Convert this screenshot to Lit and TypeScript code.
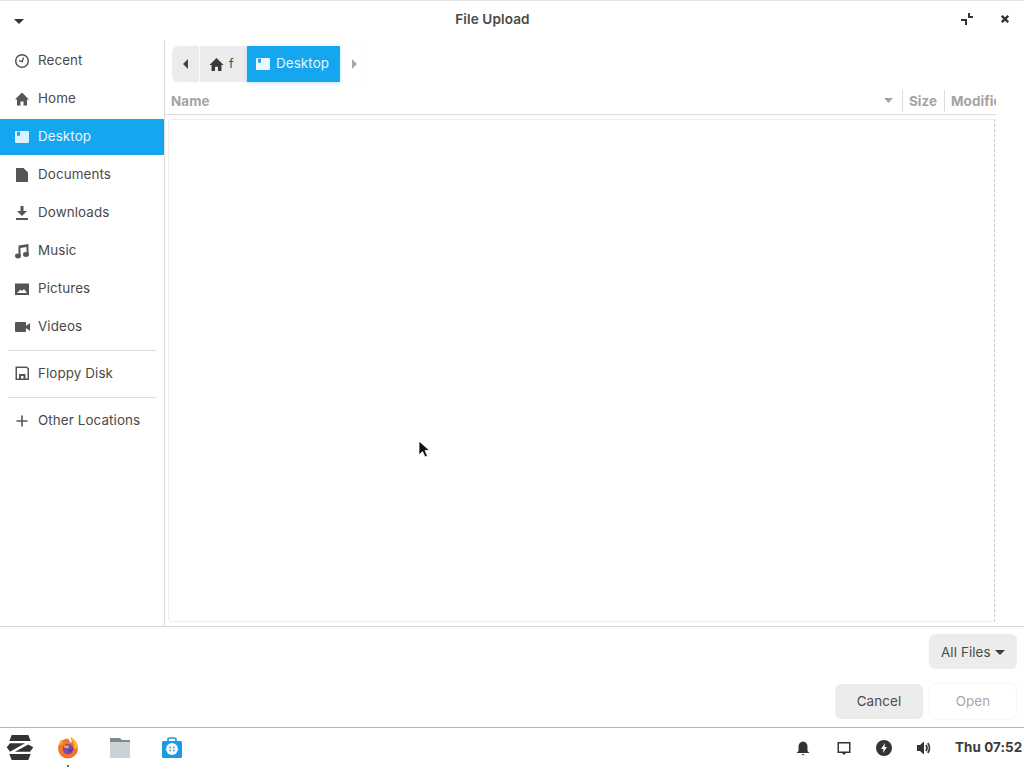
import { LitElement, html, css, svg } from "lit";
import { customElement } from "lit/decorators.js";

const ic = (inner: unknown, size = 16, vb = "0 0 16 16") =>
  html`<svg width=${size} height=${size} viewBox=${vb} aria-hidden="true">${inner}</svg>`;

const desktopIcon = (c: string, c2: string) => ic(svg`
  <rect x="1" y="2" width="14" height="12" rx="1" fill=${c}/>
  <rect x="3" y="2.7" width="3" height="4" fill=${c2}/>`);

const icons: Record<string, unknown> = {
  recent: ic(svg`<circle cx="8" cy="8" r="6.3" fill="none" stroke="#555" stroke-width="1.5"/><path d="M9.5 4.5L8.3 8.6L5 7.6" fill="none" stroke="#555" stroke-width="1.3"/>`),
  home: ic(svg`<path d="M8 1.5L15 8.5H13V14.5H9.5V10.5H6.5V14.5H3V8.5H1Z" fill="#555"/>`),
  documents: ic(svg`<path d="M2 1H9.5L14 5.5V15H2Z" fill="#555"/>`),
  downloads: ic(svg`<path d="M6.5 1H9.5V6H13L8 11L3 6H6.5Z" fill="#555"/><rect x="2" y="13" width="12" height="2" fill="#555"/>`),
  music: ic(svg`<path d="M4.5 2.5L14.5 1V11.5H12.5V4L6.5 5V13H4.5Z" fill="#555"/><ellipse cx="4" cy="13" rx="3" ry="2.4" fill="#555"/><ellipse cx="12" cy="11.5" rx="3" ry="2.4" fill="#555"/>`),
  pictures: ic(svg`<path fill-rule="evenodd" d="M1 2.5H15V14H1ZM3 12H13L10 8L8 10L6.5 8.5Z" fill="#555"/>`),
  videos: ic(svg`<rect x="1" y="3" width="11" height="10" rx="1" fill="#555"/><path d="M12 7L16 4V12L12 9Z" fill="#555"/>`),
  floppy: ic(svg`<path fill-rule="evenodd" d="M1.5 1.5H13L15 3.5V15H1.5ZM3 3V13.5H5V9H11.5V13.5H13.5V4L12.5 3ZM7 11V13.5H9.5V11Z" fill="#555"/>`),
  plus: ic(svg`<path d="M7.2 2.5H8.8V7.2H13.5V8.8H8.8V13.5H7.2V8.8H2.5V7.2H7.2Z" fill="#555"/>`),
};

const places = [
  { n: "Recent", i: "recent" },
  { n: "Home", i: "home" },
  { n: "Desktop", i: "desktop", sel: true },
  { n: "Documents", i: "documents" },
  { n: "Downloads", i: "downloads" },
  { n: "Music", i: "music" },
  { n: "Pictures", i: "pictures" },
  { n: "Videos", i: "videos" },
];

@customElement("app-root")
export class AppRoot extends LitElement {
  static styles = css`
    :host {
      display: flex;
      flex-direction: column;
      width: 1024px;
      height: 768px;
      overflow: hidden;
      position: relative;
      background: #fff;
      font-family: Inter, "Liberation Sans", sans-serif;
      font-size: 13.4px;
      letter-spacing: 0.1px;
      color: #4a4a4a;
    }
    svg { display: block; flex: none; }
    .titlebar {
      height: 40px;
      flex: none;
      box-sizing: border-box;
      border-top: 1px solid #e4e4e4;
      display: grid;
      grid-template-columns: 37px 1fr 76px;
      align-items: center;
    }
    .menu-arrow { justify-self: center; }
    .title { text-align: center; font-weight: 600; font-size: 13.6px; color: #4a4a4a; margin-bottom: 4px; }
    .win-btns { display: flex; justify-content: space-between; align-items: center; padding: 0 15px 3px 13px; }

    .main { flex: 1; display: flex; min-height: 0; }
    .sidebar {
      width: 164px;
      flex: none;
      border-right: 1px solid #dcdcdc;
      padding-top: 3px;
    }
    .place {
      height: 36px;
      margin-bottom: 2px;
      display: flex;
      align-items: center;
      gap: 8px;
      padding-left: 14px;
    }
    .place span { margin-bottom: 2px; }
    .place.floppy span { margin-bottom: 0; }
    .place.sel { background: #15a6f0; color: #e6f6fe; }
    .sep { height: 1px; background: #dcdcdc; margin: 5px 8px 4px; }
    .sep.b { margin: 6px 8px 5px; }

    .content { flex: 1; display: flex; flex-direction: column; min-width: 0; }
    .pathbar { height: 47px; flex: none; padding: 6px 0 0 7px; display: flex; box-sizing: border-box; }
    .pathbar > * { height: 36px; display: flex; align-items: center; box-sizing: border-box; }
    .pathbar span { margin-bottom: 2px; }
    .back { width: 27px; background: #ececec; border-radius: 6px 0 0 6px; justify-content: center; margin-right: 1px; }
    .homeb { width: 47px; background: #ececec; padding-left: 9px; gap: 5px; }
    .homeb span { font-size: 12.5px; }
    .desk { width: 93px; background: #15a6f0; color: #e6f6fe; padding-left: 8px; gap: 5px; box-shadow: 0 1px 4px rgba(21,166,240,.3); }
    .fwd { width: 27px; justify-content: center; border-radius: 0 6px 6px 0; box-shadow: 0 0 2px rgba(0,0,0,.06); }
    .cols {
      height: 28px;
      flex: none;
      width: 831px;
      border-bottom: 1px solid #dcdcdc;
      display: flex;
      align-items: center;
      font-weight: 700;
      font-size: 13.4px;
      color: #a3a3a3;
      box-sizing: border-box;
    }
    .col { height: 22px; display: flex; align-items: center; overflow: hidden; box-sizing: border-box; }
    .col.name { flex: 1; padding: 0 9px 0 6px; justify-content: space-between; }
    .col.size { width: 42px; border-left: 1px solid #dcdcdc; padding-left: 6px; }
    .col.mod { width: 52px; border-left: 1px solid #dcdcdc; padding-left: 6px; white-space: nowrap; }
    .list-wrap { flex: 1; padding: 4px 29px 4px 3px; min-height: 0; }
    .list {
      height: 100%;
      box-sizing: border-box;
      border: 1px solid #ececec;
      border-right: 1px dashed #c8c8c8;
      border-radius: 4px 0 0 4px;
    }

    .footer {
      height: 101px;
      flex: none;
      box-sizing: border-box;
      border-top: 1px solid #d6d6d6;
      display: flex;
      flex-direction: column;
      align-items: flex-end;
      padding: 7px 7px 0 0;
      gap: 15px;
    }
    .btn {
      height: 35px;
      border-radius: 6px;
      display: flex;
      align-items: center;
      justify-content: center;
      box-sizing: border-box;
      background: #ececec;
    }
    .filter { width: 88px; gap: 4px; justify-content: flex-start; padding-left: 12px; }
    .actions { display: flex; gap: 7px; padding-right: 1px; }
    .cancel { width: 88px; }
    .cancel span, .open span { margin-bottom: 1px; }
    .open { width: 86px; background: #fff; color: #a8a8a8; box-shadow: 0 0 2px rgba(0,0,0,.12); }

    .taskbar {
      height: 41px;
      flex: none;
      box-sizing: border-box;
      border-top: 1px solid #b4b4b4;
      display: flex;
      align-items: center;
      padding: 0 0 0 6px;
    }
    .apps { display: flex; align-items: center; }
    .app { position: relative; display: flex; justify-content: center; }
    .dot { position: absolute; left: 50%; bottom: -7px; width: 2px; height: 2px; margin-left: -1px; background: #333; border-radius: 50%; }
    .tray { margin-left: auto; display: flex; align-items: center; }
    .clock { font-weight: 700; font-size: 13.4px; color: #3c3c3c; white-space: nowrap; margin-left: 23px; width: 69px; overflow: hidden; margin-bottom: 2px; }
    .cursor { position: absolute; left: 418px; top: 440px; }
  `;

  render() {
    return html`
      <div class="titlebar">
        <div class="menu-arrow">${ic(svg`<path d="M0 3H10L5 8Z" fill="#333"/>`, 10, "0 0 10 10")}</div>
        <div class="title">File Upload</div>
        <div class="win-btns">
          ${ic(svg`<path d="M0 6H6V12H4V8H0ZM7 0H9V3H12V5H7Z" fill="#333"/>`, 12, "0 0 12 12")}
          ${ic(svg`<path d="M.8 .8L7.2 7.2M7.2 .8L.8 7.2" stroke="#333" stroke-width="2.3"/>`, 8, "0 0 8 8")}
        </div>
      </div>
      <div class="main">
        <nav class="sidebar">
          ${places.map(
            (p) => html`<div class="place ${p.sel ? "sel" : ""}">
              ${p.i === "desktop" ? desktopIcon("#d9f1fd", "#15a6f0") : icons[p.i]}
              <span>${p.n}</span>
            </div>`
          )}
          <div class="sep"></div>
          <div class="place floppy">${icons.floppy}<span>Floppy Disk</span></div>
          <div class="sep b"></div>
          <div class="place">${icons.plus}<span>Other Locations</span></div>
        </nav>
        <section class="content">
          <div class="pathbar">
            <div class="back">${ic(svg`<path d="M7 0V10L2 5Z" fill="#444"/>`, 10, "0 0 10 10")}</div>
            <div class="homeb">${ic(svg`<path d="M8 1L15.5 8.5H13.3V15H9.6V10.5H6.4V15H2.7V8.5H.5Z" fill="#3a3a3a"/>`, 15)}<span>f</span></div>
            <div class="desk">${desktopIcon("#eaf7fe", "#15a6f0")}<span>Desktop</span></div>
            <div class="fwd">${ic(svg`<path d="M3 0V10L8 5Z" fill="#a8a8a8"/>`, 10, "0 0 10 10")}</div>
          </div>
          <div class="cols">
            <div class="col name"><span>Name</span>${ic(svg`<path d="M0 2H9L4.5 7Z" fill="#a3a3a3"/>`, 9, "0 0 9 9")}</div>
            <div class="col size">Size</div>
            <div class="col mod">Modified</div>
          </div>
          <div class="list-wrap"><div class="list"></div></div>
        </section>
      </div>
      <div class="footer">
        <div class="btn filter"><span>All Files</span>${ic(svg`<path d="M0 3H10L5 8Z" fill="#3a3a3a"/>`, 10, "0 0 10 10")}</div>
        <div class="actions">
          <div class="btn cancel"><span>Cancel</span></div>
          <div class="btn open"><span>Open</span></div>
        </div>
      </div>
      <div class="taskbar">
        <div class="apps">
          <div class="app" style="width:28px">
            ${ic(svg`<path d="M5.7 1H22.3L24.7 7H3.3Z" fill="#333"/><path d="M.7 13.3L4 9.3H19L4 17.7Z" fill="#333"/><path d="M27.3 13.3L24 17.7H9L22.3 10.5Z" fill="#333"/><path d="M3.3 20H24.7L22.3 26H5.7Z" fill="#333"/>`, 28, "0 0 28 28")}
          </div>
          <div class="app" style="width:24px;margin-left:22px">
            ${ic(svg`<path d="M12 2.5A10 10 0 1 0 22 13C22 8 19 3 14 1C16 4 16 6 15 7Z" fill="#f0762a"/><path d="M14 1C19 3 22.5 8 22 13L18 12C18.5 8 17 5 14 1Z" fill="#fbb52e"/><path d="M3 9C3 6.5 4.5 4.5 6 3.5L7 8Z" fill="#f9a92f"/><circle cx="12" cy="13" r="5.3" fill="#7b48b5"/><path d="M8 9.5H13L12.5 12Q9 13 8 11Z" fill="#f0a24a"/><path d="M12 14A3 3 0 0 0 16 11L17 13Q15.5 17 12 15Z" fill="#4a3aa8"/>`, 24, "0 0 24 24")}
            <span class="dot"></span>
          </div>
          <div class="app" style="width:24px;margin-left:28px">
            ${ic(svg`<path d="M2 2H12L14 4H22V8H2Z" fill="#7d8a8f"/><rect x="2" y="6" width="20" height="16" rx="1" fill="#c9d2d5"/>`, 24, "0 0 24 24")}
          </div>
          <div class="app" style="width:24px;margin-left:28px">
            ${ic(svg`<path d="M8 6V3.5Q8 2 10 2H14Q16 2 16 3.5V6" fill="none" stroke="#1a9ae0" stroke-width="1.6"/><rect x="2" y="5" width="20" height="17" rx="1.5" fill="#1a9ae0"/><circle cx="12" cy="13" r="6" fill="#f0f8fc"/><circle cx="10.2" cy="11.5" r=".9" fill="#6f9fb8"/><circle cx="13.8" cy="11.5" r=".9" fill="#6f9fb8"/><circle cx="10.2" cy="14.5" r=".9" fill="#6f9fb8"/><circle cx="13.8" cy="14.5" r=".9" fill="#6f9fb8"/>`, 24, "0 0 24 24")}
          </div>
        </div>
        <div class="tray">
          ${ic(svg`<path d="M8 1.5Q12.5 2 12.5 7V11L14.5 13H1.5L3.5 11V7Q3.5 2 8 1.5Z" fill="#333"/><path d="M6.5 14H9.5L8 15.5Z" fill="#333"/>`)}
          <div style="width:25px"></div>
          ${ic(svg`<path fill-rule="evenodd" d="M1.5 2H14.5V13H10L8 15L6 13H1.5ZM3 3.5V11.5H13V3.5Z" fill="#333"/>`)}
          <div style="width:24px"></div>
          ${ic(svg`<circle cx="8" cy="8" r="8" fill="#333"/><path d="M9 3L5 9H7.5L7 13L11 7H8.5Z" fill="#fff"/>`)}
          <div style="width:24px"></div>
          ${ic(svg`<path d="M1 5H4L8 1.5V14.5L4 11H1Z" fill="#333"/><path d="M10 5Q12 8 10 11" fill="none" stroke="#333" stroke-width="1.7"/><path d="M11.8 3Q15.2 8 11.8 13" fill="none" stroke="#333" stroke-width="1.6"/>`)}
          <div class="clock">Thu 07:52</div>
        </div>
      </div>
      <div class="cursor">
        ${ic(svg`<path d="M1 1V15L4.5 11.5L7 17L9.5 16L7 10.5H11.5Z" fill="#111" stroke="#fff" stroke-width=".8"/>`, 18, "0 0 18 18")}
      </div>
    `;
  }
}
